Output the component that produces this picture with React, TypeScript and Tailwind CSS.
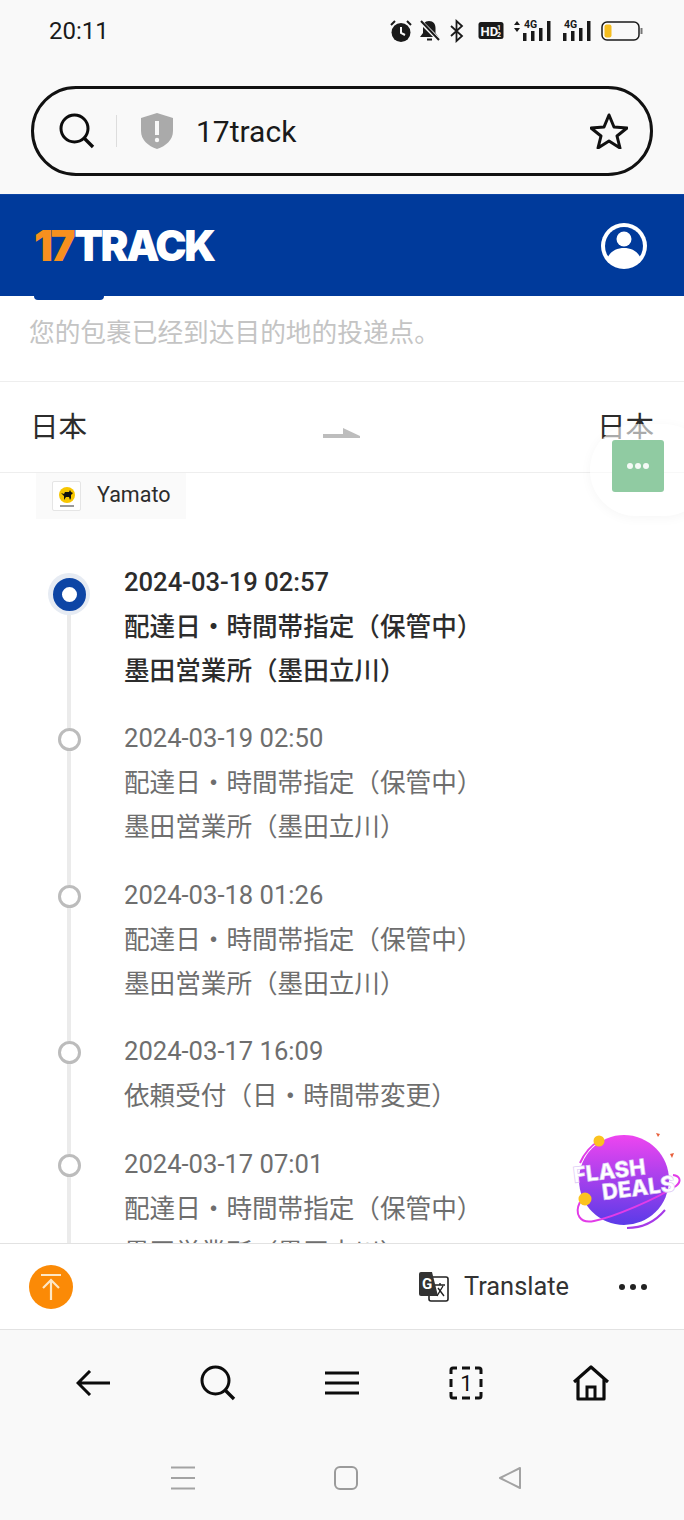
import type { ReactNode } from "react";

const events = [
  { time: "2024-03-19 02:57", lines: ["配達日・時間帯指定（保管中）", "墨田営業所（墨田立川）"], active: true },
  { time: "2024-03-19 02:50", lines: ["配達日・時間帯指定（保管中）", "墨田営業所（墨田立川）"] },
  { time: "2024-03-18 01:26", lines: ["配達日・時間帯指定（保管中）", "墨田営業所（墨田立川）"] },
  { time: "2024-03-17 16:09", lines: ["依頼受付（日・時間帯変更）"] },
  { time: "2024-03-17 07:01", lines: ["配達日・時間帯指定（保管中）", "墨田営業所（墨田立川）"] },
];

function Icon({ w, h, children, className }: { w: number; h: number; children: ReactNode; className?: string }) {
  return (
    <svg width={w} height={h} viewBox={`0 0 ${w} ${h}`} fill="none" className={className}>
      {children}
    </svg>
  );
}

function SearchIcon() {
  return (
    <Icon w={36} h={36}>
      <circle cx="15.5" cy="15.5" r="13.5" stroke="#0c0c0c" strokeWidth="3" />
      <path d="M25 25l9 9" stroke="#0c0c0c" strokeWidth="3.4" />
    </Icon>
  );
}

function Signal({ w, arrows, className }: { w: number; arrows?: boolean; className?: string }) {
  const x = w - 28;
  return (
    <Icon w={w} h={24} className={className}>
      {arrows && <path d="M1 6l3-4 3 4zM1 9h6l-3 4z" fill="#1a1a1a" />}
      <text x={x + 1} y="8.500" fontSize="10.500" fontWeight="700" fill="#1a1a1a" fontFamily="Roboto, sans-serif">
        4G
      </text>
      <rect x={x} y="14" width="3.500" height="8" fill="#1a1a1a" />
      <rect x={x + 8} y="12" width="3.500" height="10" fill="#1a1a1a" />
      <rect x={x + 16} y="9" width="3.500" height="13" fill="#1a1a1a" />
      <rect x={x + 24} y="2" width="3.500" height="20" fill="#1a1a1a" />
    </Icon>
  );
}

function StatusIcons() {
  return (
    <div className="flex items-center">
      <Icon w={22} h={24}>
        <circle cx="11" cy="13.500" r="9.500" fill="#1a1a1a" />
        <path d="M11 8v6l4 2" stroke="#f9f9f9" strokeWidth="2" />
        <path d="M1 6l4-4M21 6l-4-4" stroke="#1a1a1a" strokeWidth="2" />
      </Icon>
      <Icon w={22} h={24} className="ml-[7px]">
        <path d="M10 2c4.500 0 6.500 3 6.500 7v5l3 4H1l3-4V9c0-4 1.500-7 6-7z" fill="#1a1a1a" />
        <path d="M8 20.500h5" stroke="#1a1a1a" strokeWidth="2" />
        <path d="M2 3l18 18" stroke="#f9f9f9" strokeWidth="4" />
        <path d="M2 2l18 19" stroke="#1a1a1a" strokeWidth="2" />
      </Icon>
      <Icon w={16} h={24} className="ml-[8px]">
        <path d="M2 7l11 10-5.500 5V2L13 7 2 17" stroke="#1a1a1a" strokeWidth="1.800" />
      </Icon>
      <Icon w={26} h={20} className="ml-[13px]">
        <rect x="0.500" y="1" width="25" height="17" rx="2.500" fill="#1a1a1a" />
        <text x="2.500" y="15" fontSize="13" fontWeight="700" fill="#f9f9f9" fontFamily="Roboto, sans-serif">
          HD
        </text>
        <text x="19" y="9" fontSize="7" fontWeight="700" fill="#f9f9f9" fontFamily="Roboto, sans-serif">
          1
        </text>
        <text x="19" y="16" fontSize="7" fontWeight="700" fill="#f9f9f9" fontFamily="Roboto, sans-serif">
          2
        </text>
      </Icon>
      <Signal w={38} arrows className="ml-[9px]" />
      <Signal w={30} className="ml-[10px]" />
      <Icon w={43} h={22} className="ml-[10px]">
        <rect x="1" y="2" width="37" height="18" rx="5" stroke="#1a1a1a" strokeWidth="1.500" />
        <rect x="3.500" y="4.500" width="7" height="13" rx="2" fill="#f5bd1f" />
        <path d="M40.500 8v6" stroke="#777" strokeWidth="2" />
      </Icon>
    </div>
  );
}

function Logo() {
  return (
    <div className="relative flex items-center font-['Inter',sans-serif] text-[42px] leading-none font-black tracking-[-2.400px]">
      <span className="text-[#f7901e]">17</span>
      <span className="ml-[1px] text-white">TRACK</span>
    </div>
  );
}

function Avatar() {
  return (
    <Icon w={46} h={46}>
      <circle cx="23" cy="23" r="23" fill="#fff" />
      <circle cx="23" cy="23" r="19" fill="#003a9b" />
      <circle cx="23" cy="16" r="7.500" fill="#fff" />
      <path d="M6 36c3-8 10-11 17-11s14 3 17 11a21 21 0 0 1-34 0z" fill="#fff" />
    </Icon>
  );
}

function YamatoLogo() {
  return (
    <div className="flex h-[30px] w-[29px] flex-col items-center rounded-[2px] border border-[#e5e5e5] bg-white pt-[5px]">
      <Icon w={16} h={16}>
        <circle cx="8" cy="8" r="8" fill="#f7c600" />
        <path d="M2 6l3 1 1-2h4l1-2 1 2 2 1-2 2v3l-1 2-1-3H7l-2 3V9z" fill="#111" />
      </Icon>
      <div className="mt-[2px] h-[2px] w-[14px] bg-[#999]" />
    </div>
  );
}

function TimelineRow({ time, lines, active, first }: { time: string; lines: string[]; active?: boolean; first?: boolean }) {
  return (
    <div className="flex shrink-0 pb-[24.400px]">
      <div className="ml-[46px] -mb-[24.400px] flex w-[46px] shrink-0 flex-col items-center">
        {first ? (
          <div className="h-[13px]" />
        ) : (
          <div className="h-[12px] w-[4px] bg-[#ebebeb]" />
        )}
        {active ? (
          <div className="flex h-[42px] w-[42px] shrink-0 items-center justify-center rounded-full bg-[#e6ebf3]">
            <div className="h-[33px] w-[33px] rounded-full border-[9px] border-[#0d45a5] bg-white" />
          </div>
        ) : (
          <div className="h-[23px] w-[23px] shrink-0 rounded-full border-[3px] border-[#bcbcbc] bg-white" />
        )}
        <div className="w-[4px] flex-1 bg-[#ebebeb]" />
      </div>
      <div className={`ml-[32px] text-[25.600px] leading-[44px] ${active ? "font-medium text-[#2c2c2c]" : "text-[#6e6e6e]"}`}>
        <div className="font-['Roboto',sans-serif]">{time}</div>
        {lines.map((line, i) => (
          <div key={i} className="h-[44px] -translate-y-[1px] font-['Noto_Sans_CJK_JP',sans-serif]">
            {line}
          </div>
        ))}
      </div>
    </div>
  );
}

function FlashDeals() {
  return (
    <svg width="112" height="104" viewBox="0 0 112 104" className="absolute top-[1130px] left-[572px]">
      <defs>
        <linearGradient id="planet" x1="0" y1="0" x2="0" y2="1">
          <stop offset="0" stopColor="#ee45f0" />
          <stop offset="1" stopColor="#5a3be8" />
        </linearGradient>
      </defs>
      <circle cx="52" cy="50" r="45" fill="url(#planet)" />
      <path d="M8 72C2 84 8 94 22 91c20-4 62-22 82-35 6-5 4-10-3-11" stroke="#e23ce8" strokeWidth="2" fill="none" />
      <path d="M8 33C12 24 18 16 27 11" stroke="#e23ce8" strokeWidth="2" fill="none" />
      <path d="M55 98c14 0 28-6 38-18" stroke="#a63ae8" strokeWidth="2" fill="none" />
      <circle cx="27" cy="11" r="5.500" fill="#fbc31f" />
      <circle cx="13" cy="69" r="6.500" fill="#fbc31f" />
      <path d="M84 3l4 1-2 3zM98 24l4-1-2 5z" fill="#e8603c" />
      <g fontFamily="Inter, sans-serif" fontWeight="800" fontSize="22" fill="#fff" stroke="#d9c4f5" strokeWidth="0.600">
        <text x="2" y="53" transform="rotate(-7 2 53)">
          FLASH
        </text>
        <text x="31" y="70" transform="rotate(-7 31 70)">
          DEALS
        </text>
      </g>
    </svg>
  );
}

export default function App() {
  return (
    <div className="relative flex h-[1520px] w-[684px] flex-col overflow-hidden bg-[#f9f9f9] font-['Roboto',sans-serif]">
      {/* status bar */}
      <div className="flex h-[62px] shrink-0 items-center justify-between pr-[40px] pl-[49px]">
        <span className="text-[24px] text-[#1a1a1a]">20:11</span>
        <StatusIcons />
      </div>

      {/* url bar */}
      <div className="mx-[31px] mt-[24px] flex h-[90px] shrink-0 items-center rounded-full border-[3px] border-[#111] pr-[22px] pl-[25px]">
        <SearchIcon />
        <div className="mx-[21px] h-[32px] w-px bg-[#dddddd]" />
        <Icon w={32} h={36} className="ml-[3px]">
          <path d="M16 0l16 5v13c0 9-7 15-16 18C7 33 0 27 0 18V5z" fill="#aaaaaa" />
          <path d="M16 8v14" stroke="#f9f9f9" strokeWidth="4" />
          <circle cx="16" cy="27" r="2.200" fill="#f9f9f9" />
        </Icon>
        <span className="ml-[23px] flex-1 text-[30px] text-[#1a1a1a]">17track</span>
        <Icon w={38} h={36}>
          <path d="M19 2l5 12 13 1-10 8 3 12-11-7-11 7 3-12-10-8 13-1z" stroke="#111" strokeWidth="3" strokeLinejoin="round" />
        </Icon>
      </div>

      {/* site header */}
      <div className="mt-[18px] flex h-[102px] shrink-0 items-center justify-between border-t border-[#0d45a5] bg-[#003a9b] pr-[37px] pl-[34px]">
        <Logo />
        <Avatar />
      </div>
      <div className="absolute top-[296px] left-[34px] h-[4px] w-[70px] rounded-b-[8px] bg-[#003a9b]" />

      <div className="flex min-h-0 flex-1 flex-col bg-white">
        <div className="flex h-[86px] shrink-0 items-center border-b border-[#eeeeee] pb-[14px] pl-[29px] font-['Noto_Sans_CJK_SC',sans-serif] text-[25.700px] text-[#c4c4c4]">
          您的包裹已经到达目的地的投递点。
        </div>
        <div className="relative flex h-[91px] shrink-0 items-center justify-between border-b border-[#eeeeee] pr-[30px] pb-[4px] pl-[30px] font-['Noto_Sans_CJK_JP',sans-serif] text-[28.500px] text-[#2c2c2c]">
          <span>日本</span>
          <Icon w={38} h={10} className="absolute top-[46px] left-[323px]">
            <path d="M0 6h20V0l17 8v2H0z" fill="#bdbdbd" />
          </Icon>
          <span>日本</span>
        </div>

        <div className="ml-[36px] flex h-[46px] w-[150px] shrink-0 items-center bg-[#fafafa] pb-[1px] pl-[16px]">
          <YamatoLogo />
          <span className="ml-[16px] text-[21.500px] text-[#2c2c2c]">Yamato</span>
        </div>

        <div className="flex min-h-0 flex-1 flex-col overflow-hidden pt-[41px]">
          {events.map((e, i) => (
            <TimelineRow key={e.time} time={e.time} lines={e.lines} active={e.active} first={i === 0} />
          ))}
        </div>
      </div>

      {/* translate bar */}
      <div className="flex h-[87px] shrink-0 items-center border-y border-[#e2e2e2] bg-white pr-[37px] pl-[29px]">
        <div className="flex h-[44px] w-[44px] items-center justify-center rounded-full bg-[#fb8a06]">
          <Icon w={26} h={28}>
            <path d="M3 2h20M13 27V8M5 15l8-8 8 8" stroke="#fde7c6" strokeWidth="2.200" />
          </Icon>
        </div>
        <Icon w={30} h={30} className="ml-auto">
          <rect x="10" y="5" width="19" height="24" rx="2" fill="#fff" stroke="#222" strokeWidth="1.600" />
          <path d="M2 0h11l6 24H2a2 2 0 0 1-2-2V2a2 2 0 0 1 2-2z" fill="#333" />
          <text x="3" y="17" fontSize="15" fontWeight="700" fill="#fff" fontFamily="Roboto, sans-serif">
            G
          </text>
          <path d="M16 13h10M21 11v2M18 24l6-10M19 16l6 8" stroke="#222" strokeWidth="1.400" />
        </Icon>
        <span className="ml-[15px] text-[25.400px] text-[#333]">Translate</span>
        <div className="ml-[50px] flex w-[28px] justify-between">
          <div className="h-[6px] w-[6px] rounded-full bg-[#222]" />
          <div className="h-[6px] w-[6px] rounded-full bg-[#222]" />
          <div className="h-[6px] w-[6px] rounded-full bg-[#222]" />
        </div>
      </div>

      {/* browser toolbar */}
      <div className="grid h-[106px] shrink-0 grid-cols-5 items-center justify-items-center px-[31px]">
        <Icon w={34} h={26}>
          <path d="M34 13H2M14 1L2 13l12 12" stroke="#0c0c0c" strokeWidth="3" />
        </Icon>
        <SearchIcon />
        <Icon w={34} h={24}>
          <path d="M0 2h34M0 12h34M0 22h34" stroke="#0c0c0c" strokeWidth="3.200" />
        </Icon>
        <div className="relative flex h-[34px] w-[34px] items-center justify-center text-[22px] text-[#111]">
          <Icon w={34} h={34} className="absolute inset-0">
            <path
              d="M2 8V4a2 2 0 0 1 2-2h4M26 2h4a2 2 0 0 1 2 2v4M32 26v4a2 2 0 0 1-2 2h-4M8 32H4a2 2 0 0 1-2-2v-4M13 2h8M13 32h8M2 13v8M32 13v8"
              stroke="#111"
              strokeWidth="3"
            />
          </Icon>
          1
        </div>
        <Icon w={36} h={36}>
          <path d="M1 17L18 2l17 15M5 14v20h26V14" stroke="#0c0c0c" strokeWidth="3.200" strokeLinejoin="round" />
          <path d="M14 34V22h8v12" stroke="#0c0c0c" strokeWidth="3" />
        </Icon>
      </div>

      {/* android nav */}
      <div className="grid h-[84px] shrink-0 grid-cols-3 items-center justify-items-center pr-[92px] pl-[101px]">
        <Icon w={24} h={24}>
          <path d="M0 1.500h24M0 12h24M0 22.500h24" stroke="#a3a3a3" strokeWidth="2" />
        </Icon>
        <Icon w={24} h={24}>
          <rect x="1" y="1" width="22" height="22" rx="5" stroke="#9b9b9b" strokeWidth="2" />
        </Icon>
        <Icon w={24} h={24}>
          <path d="M22 2L2 12l20 10z" stroke="#a3a3a3" strokeWidth="2" strokeLinejoin="round" />
        </Icon>
      </div>

      {/* floating stuff */}
      <div className="absolute top-[424px] left-[590px] h-[92px] w-[120px] rounded-full bg-white/60 shadow-[0_2px_12px_rgba(0,0,0,0.04)]" />
      <div className="absolute top-[440px] left-[612px] flex h-[52px] w-[52px] items-center justify-center gap-[2px] rounded-[3px] bg-[#90cba2]">
        <div className="h-[6px] w-[6px] rounded-full bg-white/90" />
        <div className="h-[6px] w-[6px] rounded-full bg-white/90" />
        <div className="h-[6px] w-[6px] rounded-full bg-white/90" />
      </div>
      <FlashDeals />
    </div>
  );
}
